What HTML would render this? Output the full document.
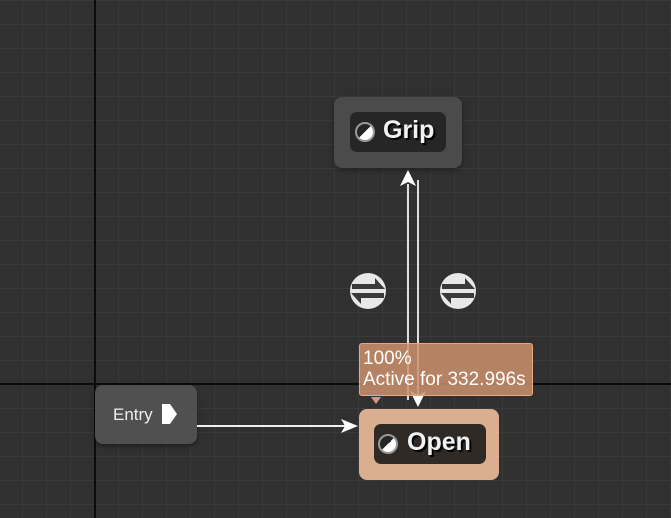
<!DOCTYPE html>
<html><head><style>
body{margin:0;width:671px;height:518px;overflow:hidden;background:#303030;font-family:"Liberation Sans",sans-serif;position:relative}
.grid{position:absolute;inset:0;background-image:linear-gradient(to right,#3a3a3a 1px,transparent 1px),linear-gradient(to bottom,#3a3a3a 1px,transparent 1px);background-size:24px 24px;background-position:22px 0px}
.vl{position:absolute;left:94px;top:0;width:2px;height:518px;background:#0c0c0c}
.hl{position:absolute;top:383px;left:0;width:671px;height:2px;background:#0c0c0c}
.node{position:absolute;border-radius:8px}
.pill{position:absolute;border-radius:7px;background:#262626;color:#f2f2f2;font-weight:bold;font-size:25px;text-shadow:2px 2px 0 #000;box-sizing:border-box}
.circ{position:absolute;width:16px;height:16px;border-radius:50%;border:2px solid #999;background:linear-gradient(135deg,#262626 50%,#fff 50%);}
</style></head><body>
<div class="grid"></div>
<div class="vl"></div><div class="hl"></div>

<div class="node" style="left:334px;top:97px;width:128px;height:71px;background:#4b4b4b;box-shadow:0 2px 4px rgba(0,0,0,.4)"></div>
<div class="pill" style="left:350px;top:112px;width:96px;height:40px;">
<div class="circ" style="left:5px;top:10px"></div>
<span style="position:absolute;left:33px;top:4px">Grip</span></div>

<div class="node" style="left:95px;top:385px;width:102px;height:59px;background:#505050;box-shadow:0 2px 4px rgba(0,0,0,.4)"></div>
<div style="position:absolute;left:113px;top:405px;color:#eee;font-size:17px">Entry</div>
<svg style="position:absolute;left:160px;top:403px" width="20" height="22"><path d="M2 1H10L17 11L10 21H2Z" fill="#fff" /></svg>

<div class="node" style="left:359px;top:409px;width:140px;height:71px;background:#dcae90"></div>
<div class="pill" style="left:374px;top:424px;width:112px;height:40px;background:#302a26">
<div class="circ" style="left:4px;top:10px"></div>
<span style="position:absolute;left:33px;top:4px">Open</span></div>

<svg style="position:absolute;left:0;top:0" width="671" height="518">
<line x1="197" y1="426" x2="345" y2="426" stroke="#eee" stroke-width="2"/>
<path d="M358 426L341 419L345 426L341 433Z" fill="#fff"/>
<line x1="408" y1="184" x2="408" y2="400" stroke="#ddd" stroke-width="2"/>
<path d="M408 170L400 186L408 182L416 186Z" fill="#fff"/>
<line x1="418" y1="180" x2="418" y2="396" stroke="#ddd" stroke-width="2"/>
<path d="M418 407L410 391L418 395L426 391Z" fill="#fff"/>
<g>
<circle cx="368" cy="291" r="18" fill="#e8e8e8"/>
<polygon points="352,284 375,284 375,278 385,289 352,289" fill="#3a3a3a"/>
<polygon points="384,293 351,293 361,304 361,298 384,298" fill="#3a3a3a"/>
</g>
<g>
<circle cx="458" cy="291" r="18" fill="#e8e8e8"/>
<polygon points="442,284 465,284 465,278 475,289 442,289" fill="#3a3a3a"/>
<polygon points="474,293 441,293 451,304 451,298 474,298" fill="#3a3a3a"/>
</g>
</svg>

<div style="position:absolute;left:359px;top:343px;width:174px;height:53px;background:rgba(205,145,108,.85);border:1px solid #eaa880;border-radius:3px;color:#fff;font-size:19px;line-height:21px;padding:4px 0 0 3px;box-sizing:border-box;white-space:nowrap">100%<br>Active for 332.996s</div>
<div style="position:absolute;left:371px;top:397px;width:0;height:0;border-left:5px solid transparent;border-right:5px solid transparent;border-top:7px solid #d89a76"></div>
</body></html>
